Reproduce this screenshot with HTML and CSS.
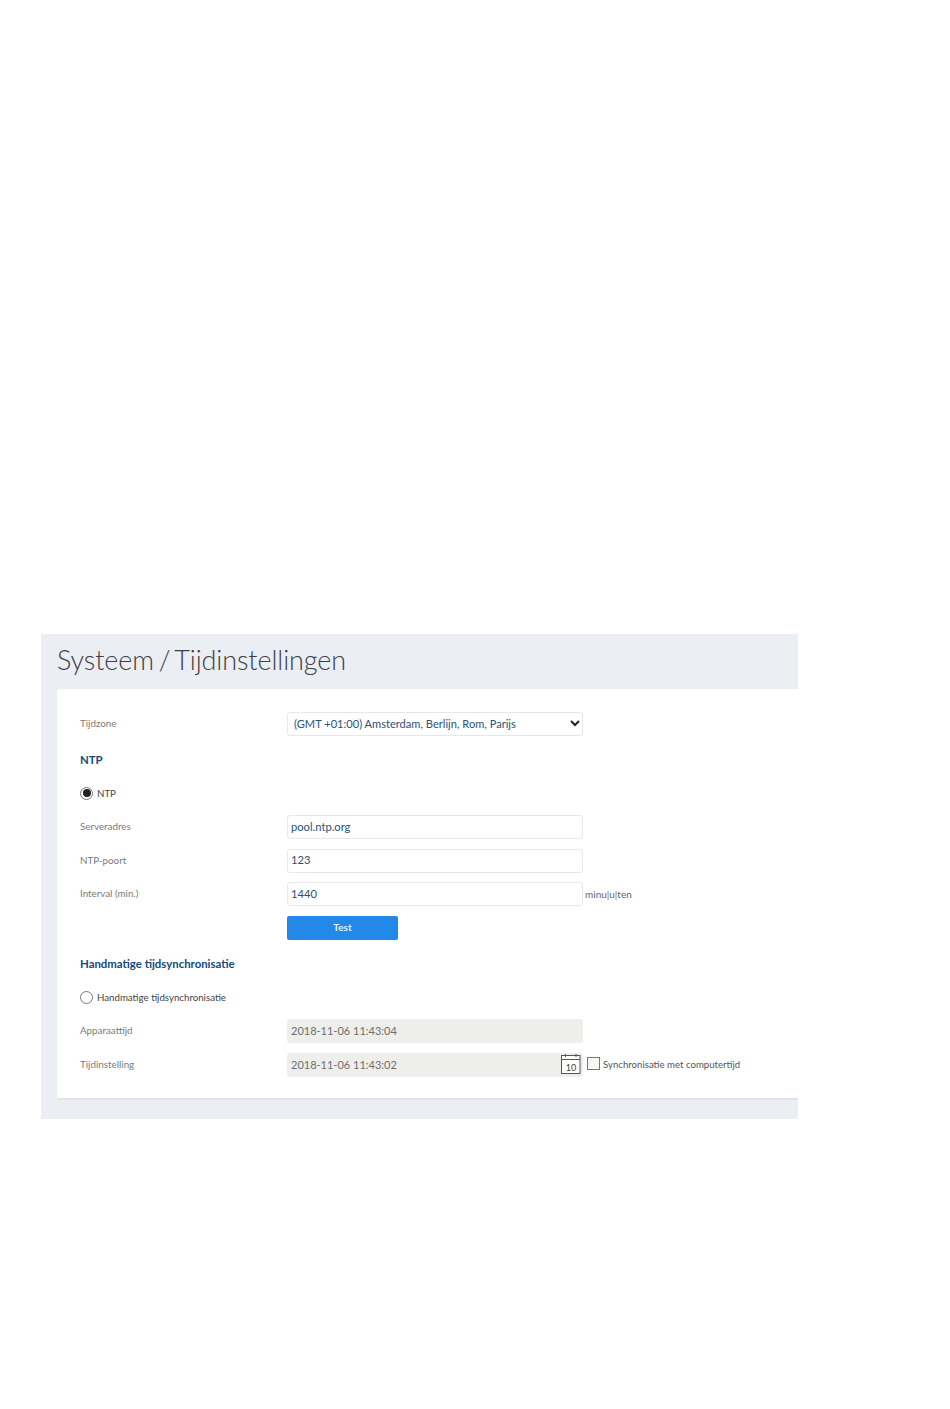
FILE: index.html
```html
<!DOCTYPE html>
<html lang="nl">
<head>
    <meta charset="UTF-8">
    <title>Systeem / Tijdinstellingen</title>
    <link rel="stylesheet" href="styles.css">
</head>
<body>
    <div class="page">
        <h1 class="title">Systeem / Tijdinstellingen</h1>
        <div class="card">
            <div class="row">
                <label class="label" for="zone">Tijdzone</label>
                <select class="field field-select" id="zone">
                    <option>(GMT +01:00) Amsterdam, Berlijn, Rom, Parijs</option>
                </select>
            </div>

            <h2 class="section">NTP</h2>
            <div class="row">
                <label class="radio"><span class="dot dot-on"></span>NTP</label>
            </div>
            <div class="row">
                <label class="label" for="server">Serveradres</label>
                <input class="field" id="server" type="text" value="pool.ntp.org">
            </div>
            <div class="row">
                <label class="label" for="port">NTP-poort</label>
                <input class="field" id="port" type="text" value="123">
            </div>
            <div class="row">
                <label class="label" for="interval">Interval (min.)</label>
                <input class="field" id="interval" type="text" value="1440">
                <span class="unit">minu|u|ten</span>
            </div>
            <div class="row">
                <span class="label"></span>
                <button class="btn" type="button">Test</button>
            </div>

            <h2 class="section">Handmatige tijdsynchronisatie</h2>
            <div class="row">
                <label class="radio"><span class="dot"></span>Handmatige tijdsynchronisatie</label>
            </div>
            <div class="row">
                <label class="label" for="device">Apparaattijd</label>
                <input class="field field-off" id="device" type="text" value="2018-11-06 11:43:04" disabled>
            </div>
            <div class="row">
                <label class="label" for="setting">Tijdinstelling</label>
                <div class="date-wrap">
                    <input class="field field-off" id="setting" type="text" value="2018-11-06 11:43:02" disabled>
                    <span class="cal">
                        <svg width="20" height="20" viewBox="0 0 20 20" fill="none" stroke="#555" stroke-width="1">
                            <rect x="0.5" y="1.5" width="18.5" height="18" fill="#fff"/>
                            <path d="M0.5 5.5H19M4.5 0V3M15 0V3"/>
                        </svg>
                        <span class="cal-num">10</span>
                    </span>
                </div>
                <label class="check"><span class="box"></span>Synchronisatie met computertijd</label>
            </div>
        </div>
    </div>
</body>
</html>
```

FILE: styles.css
```css
body {
    margin: 0;
    background: #fff;
    font-family: Lato, "Open Sans", sans-serif;
}
.page {
    width: 757px;
    height: 485px;
    margin: 634px 0 0 41px;
    padding-left: 16px;
    box-sizing: border-box;
    background: #ebeef3;
}
.title {
    margin: 0;
    height: 55px;
    line-height: 52px;
    font-size: 27px;
    font-weight: 300;
    letter-spacing: -0.1px;
    word-spacing: -2.5px;
    color: #3c4148;
}
.card {
    height: 411px;
    padding: 18px 0 0 23px;
    box-sizing: border-box;
    background: #fff;
    border-bottom: 2px solid #e0e4ea;
    border-radius: 3px 0 0 3px;
}
.row {
    display: flex;
    align-items: center;
    height: 33.4px;
}
.label {
    width: 207px;
    flex: none;
    margin-bottom: 2px;
    font-size: 9.8px;
    color: #7b7b7b;
}
.section {
    margin: 3.6px 0 0;
    height: 33.4px;
    line-height: 32.4px;
    font-size: 11.4px;
    font-weight: 700;
    color: #15497c;
}
.field {
    width: 296px;
    height: 24px;
    padding: 0 3px 2px;
    box-sizing: border-box;
    border: 1px solid #e6e8ea;
    border-radius: 3px;
    background: #fff;
    font-family: Lato, sans-serif;
    font-size: 11.2px;
    color: #2d5274;
}
.field-select {
    appearance: none;
    padding: 0 3px 0 6px;
    font-size: 11.1px;
    background: #fff url("data:image/svg+xml,%3Csvg xmlns='http://www.w3.org/2000/svg' width='10' height='7'%3E%3Cpath d='M1 1l4 4 4-4' fill='none' stroke='%23222' stroke-width='2'/%3E%3C/svg%3E") no-repeat right 2px center;
}
.field-off {
    background: #eeeeea;
    border-color: #eeeeea;
    font-size: 11px;
    color: #6f6f6f;
}
.unit {
    margin-left: 2px;
    font-size: 10px;
    color: #666;
}
.btn {
    width: 111px;
    height: 24px;
    padding: 0 0 2px;
    border: none;
    border-radius: 2px;
    background: #2289e8;
    color: #e6f2fd;
    font-family: Lato, sans-serif;
    font-size: 10px;
    font-weight: 700;
}
.radio {
    display: flex;
    align-items: center;
    margin-bottom: 2px;
    font-size: 9.7px;
    color: #444;
}
.dot {
    position: relative;
    width: 13px;
    height: 13px;
    margin-right: 4px;
    box-sizing: border-box;
    border: 1px solid #777;
    border-radius: 50%;
    background: #fff;
}
.dot-on::after {
    content: "";
    position: absolute;
    top: 1.5px;
    left: 1.5px;
    width: 8px;
    height: 8px;
    border-radius: 50%;
    background: #222;
}
.date-wrap {
    position: relative;
    width: 296px;
    height: 24px;
}
.cal {
    position: absolute;
    top: 1px;
    right: 2px;
    width: 20px;
    height: 20px;
}
.cal-num {
    position: absolute;
    left: 0;
    right: 0;
    top: 8px;
    text-align: center;
    font-size: 9px;
    line-height: 11px;
    color: #444;
}
.check {
    display: flex;
    align-items: center;
    margin: 0 0 2px 4px;
    font-size: 9.65px;
    color: #555;
}
.box {
    width: 11px;
    height: 11px;
    margin-right: 3px;
    border: 1px solid #777;
    background: #f6f6f4;
}
```
